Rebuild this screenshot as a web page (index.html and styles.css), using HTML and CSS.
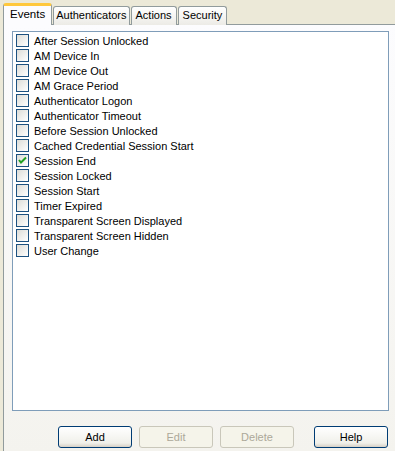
FILE: index.html
```html
<!DOCTYPE html>
<html lang="en">
<head>
    <meta charset="UTF-8">
    <title>Events</title>
    <link rel="stylesheet" href="styles.css">
</head>
<body>

<div class="window">
    <div class="tabs">
        <div class="tab active">Events</div>
        <div class="tab tab-wide">Authenticators</div>
        <div class="tab">Actions</div>
        <div class="tab">Security</div>
    </div>

    <div class="panel">
        <ul class="list">
            <li class="item"><span class="check"></span>After Session Unlocked</li>
            <li class="item"><span class="check"></span>AM Device In</li>
            <li class="item"><span class="check"></span>AM Device Out</li>
            <li class="item"><span class="check"></span>AM Grace Period</li>
            <li class="item"><span class="check"></span>Authenticator Logon</li>
            <li class="item"><span class="check"></span>Authenticator Timeout</li>
            <li class="item"><span class="check"></span>Before Session Unlocked</li>
            <li class="item"><span class="check"></span>Cached Credential Session Start</li>
            <li class="item"><span class="check checked"><svg width="11" height="11" viewBox="0 0 11 11"><path d="M2 5 L4 7.5 L9 2.5" fill="none" stroke="#21a121" stroke-width="2"/></svg></span>Session End</li>
            <li class="item"><span class="check"></span>Session Locked</li>
            <li class="item"><span class="check"></span>Session Start</li>
            <li class="item"><span class="check"></span>Timer Expired</li>
            <li class="item"><span class="check"></span>Transparent Screen Displayed</li>
            <li class="item"><span class="check"></span>Transparent Screen Hidden</li>
            <li class="item"><span class="check"></span>User Change</li>
        </ul>

        <div class="buttons">
            <button class="btn">Add</button>
            <button class="btn" disabled>Edit</button>
            <button class="btn" disabled>Delete</button>
            <button class="btn help">Help</button>
        </div>
    </div>
</div>

</body>
</html>
```

FILE: styles.css
```css
* {
    margin: 0;
    padding: 0;
    box-sizing: border-box;
}

body {
    background-color: #ece9d8;
    font-family: Tahoma, "Liberation Sans", Arial, sans-serif;
    font-size: 11px;
    color: #000;
    width: 395px;
    height: 451px;
    overflow: hidden;
}

.window {
    padding-top: 3px;
    padding-left: 3px;
}

/* Abas */
.tabs {
    display: flex;
    align-items: flex-end;
    height: 22px;
    position: relative;
    z-index: 1;
}

.tab {
    height: 19px;
    padding: 0 4px;
    margin-right: 1px;
    border: 1px solid #919b9c;
    border-bottom: none;
    border-radius: 3px 3px 0 0;
    background: linear-gradient(#ffffff, #ecebe6);
    line-height: 17px;
    text-align: center;
}

.tab.tab-wide {
    padding: 0 2px;
}

.tab.active {
    height: 22px;
    padding: 0 6px;
    margin-right: 1px;
    border-top: 3px solid #ffc83c;
    background: #fcfcfe;
    line-height: 17px;
    font-size: 11.5px;
}

.panel {
    width: 400px;
    height: 430px;
    margin-top: -1px;
    border: 1px solid #919b9c;
    background: linear-gradient(#fcfcfe, #f4f3ee);
    padding: 6px 0 0 8px;
}

/* Lista de eventos */
.list {
    list-style: none;
    width: 377px;
    height: 380px;
    border: 1px solid #7f9db9;
    background-color: #fff;
    padding: 1px 3px 0;
}

.item {
    display: flex;
    align-items: center;
    height: 15px;
    white-space: nowrap;
}

.check {
    width: 13px;
    height: 13px;
    margin-right: 5px;
    border: 1px solid #1c5180;
    background: linear-gradient(135deg, #dcdcd7, #ffffff);
    display: flex;
    align-items: center;
    justify-content: center;
}

/* Botões */
.buttons {
    display: flex;
    gap: 7px;
    width: 377px;
    justify-content: flex-end;
    padding-right: 1px;
    margin-top: 15px;
}

.btn {
    width: 74px;
    height: 22px;
    font-family: inherit;
    font-size: 11px;
    color: #000;
    border: 1px solid #003c74;
    border-radius: 3px;
    background: linear-gradient(#ffffff, #f0f0ea 80%, #d6d0c5);
}

.btn:disabled {
    color: #aca899;
    border-color: #c9c7ba;
    background: #f5f4ea;
}

.btn.help {
    margin-left: 13px;
}
```
